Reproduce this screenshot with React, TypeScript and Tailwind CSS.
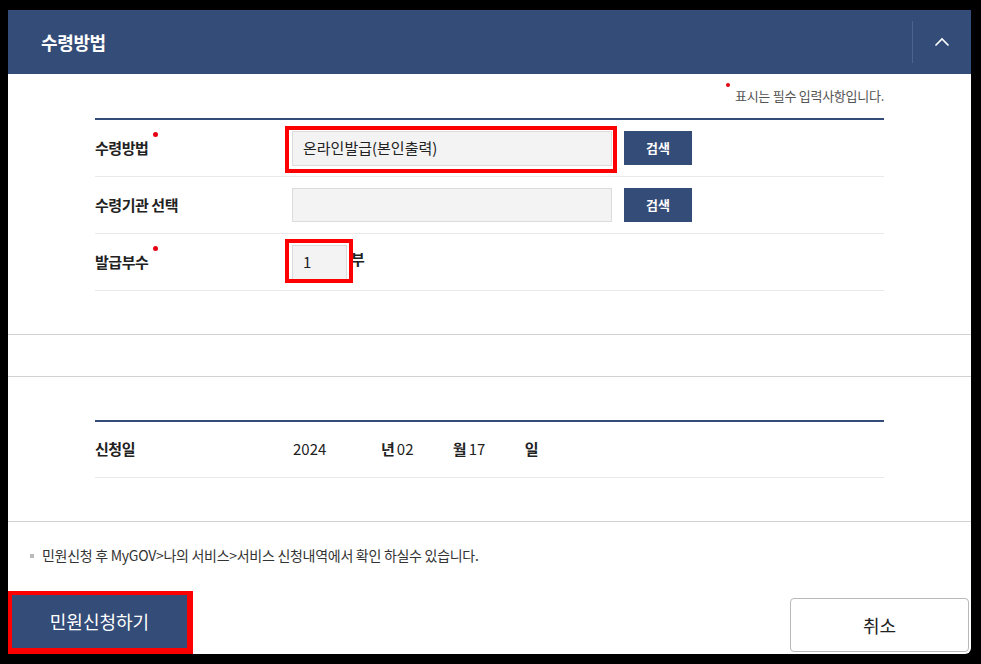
const NAVY = 'bg-[#344c78]';

const RequiredDot = () => (
    <span className="absolute -right-[10px] -top-[5px] w-[5px] h-[5px] rounded-full bg-[#e60012]" />
);

const Highlight = ({ className }: { className: string }) => (
    <span className={`absolute border-[4px] border-[#ff0000] pointer-events-none ${className}`} />
);

const ChevronUpIcon = () => (
    <svg xmlns="http://www.w3.org/2000/svg" width="16" height="10" viewBox="0 0 16 10" fill="none" stroke="white" strokeWidth={1.6}>
        <path d="M1.5 8.5L8 2l6.5 6.5" />
    </svg>
);

const App = () => {
    return (
        <div
            className="w-[981px] h-[664px] bg-black pt-[10px] pl-[8px] pr-[10px] pb-[10px]"
            style={{ fontFamily: '"Noto Sans CJK KR", "Noto Sans", sans-serif' }}
        >
            <div className="h-full bg-white flex flex-col rounded-br-[6px]">
                {/* Header */}
                <div className={`h-[64px] ${NAVY} flex items-center justify-between shrink-0`}>
                    <h2 className="pl-[33px] text-white text-[18px] font-bold tracking-[-0.02em]">수령방법</h2>
                    <div className="h-full flex items-center">
                        <div className="w-px h-[42px] bg-[#4d6491]" />
                        <button className="w-[58px] h-full flex items-center justify-center">
                            <ChevronUpIcon />
                        </button>
                    </div>
                </div>

                {/* Form */}
                <div className="px-[87px]">
                    <div className="h-[44px] flex items-center justify-end">
                        <span className="relative text-[13px] text-[#555] tracking-[-0.02em] pl-[9px]">
                            <span className="absolute left-0 -top-[3px] w-[4px] h-[4px] rounded-full bg-[#e60012]" />
                            표시는 필수 입력사항입니다.
                        </span>
                    </div>
                    <div className={`h-[2px] ${NAVY}`} />

                    <div className="h-[57px] flex items-center border-b border-[#e9e9e9]">
                        <div className="w-[197px] text-[15px] font-bold text-[#222] tracking-[-0.03em]">
                            <span className="relative">수령방법<RequiredDot /></span>
                        </div>
                        <div className="relative">
                            <div className="w-[320px] h-[35px] bg-[#f3f3f3] border border-[#dcdcdc] flex items-center px-[10px] text-[15px] text-[#222]">
                                온라인발급(본인출력)
                            </div>
                            <Highlight className="-left-[7px] -right-[5px] -top-[5px] -bottom-[7px]" />
                        </div>
                        <button className={`ml-[12px] w-[68px] h-[34px] ${NAVY} text-white text-[13px] font-bold`}>검색</button>
                    </div>

                    <div className="h-[57px] flex items-center border-b border-[#e9e9e9]">
                        <div className="w-[197px] text-[15px] font-bold text-[#222] tracking-[-0.03em]">수령기관 선택</div>
                        <div className="w-[320px] h-[34px] bg-[#f3f3f3] border border-[#dcdcdc]" />
                        <button className={`ml-[12px] w-[68px] h-[34px] ${NAVY} text-white text-[13px] font-bold`}>검색</button>
                    </div>

                    <div className="h-[57px] flex items-center border-b border-[#e9e9e9]">
                        <div className="w-[197px] text-[15px] font-bold text-[#222] tracking-[-0.03em]">
                            <span className="relative">발급부수<RequiredDot /></span>
                        </div>
                        <div className="relative">
                            <div className="w-[55px] h-[35px] bg-[#f3f3f3] border border-[#dcdcdc] flex items-center px-[10px] text-[15px] text-[#222]">
                                1
                            </div>
                            <Highlight className="-left-[7px] -right-[6px] -top-[6px] -bottom-[3px]" />
                        </div>
                        <span className="ml-[4px] -mt-[6px] text-[15px] font-bold text-[#222]">부</span>
                    </div>
                </div>

                <div className="h-[43px] shrink-0" />
                <div className="h-[43px] border-t border-b border-[#d2d2d2] shrink-0" />

                <div className="px-[87px] pt-[43px]">
                    <div className={`h-[2px] ${NAVY}`} />
                    <div className="h-[56px] flex items-center border-b border-[#e9e9e9] text-[15px] text-[#222]">
                        <div className="w-[198px] font-bold tracking-[-0.03em]">신청일</div>
                        <span className="w-[88px]">2024</span>
                        <span className="font-bold">년</span>
                        <span className="w-[58px] pl-[2px]">02</span>
                        <span className="font-bold">월</span>
                        <span className="w-[58px] pl-[2px]">17</span>
                        <span className="font-bold">일</span>
                    </div>
                </div>

                <div className="h-[44px] shrink-0 border-b border-[#d2d2d2]" />

                {/* Footer */}
                <div className="flex-1 flex flex-col">
                    <div className="h-[67px] flex items-center pl-[22px]">
                        <span className="w-[4px] h-[4px] bg-[#bbb] mr-[8px]" />
                        <span className="text-[14px] text-[#333] tracking-[-0.02em]">
                            민원신청 후 MyGOV&gt;나의 서비스&gt;서비스 신청내역에서 확인 하실수 있습니다.
                        </span>
                    </div>
                    <div className="flex-1 flex items-end justify-between">
                        <div className="border-[4px] border-[#ff0000] border-r-[6px] border-b-[6px]">
                            <button className={`w-[175px] h-[53px] ${NAVY} text-white text-[18px]`}>민원신청하기</button>
                        </div>
                        <button className="mb-[2px] mr-[2px] w-[179px] h-[54px] bg-white border border-[#b9b9b9] rounded-[4px] text-[18px] text-[#222]">
                            취소
                        </button>
                    </div>
                </div>
            </div>
        </div>
    );
};

export default App;
